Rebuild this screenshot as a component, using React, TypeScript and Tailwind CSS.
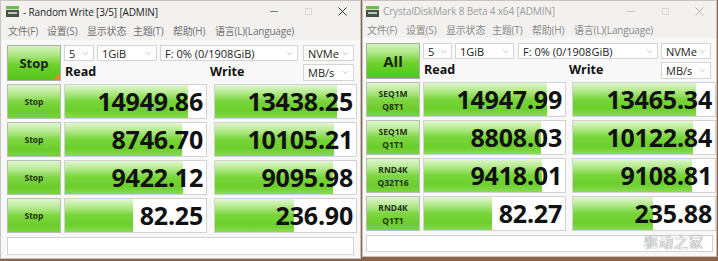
import React from "react";
import { ChevronDown } from "lucide-react";

type Row = { label: string[]; read: number; write: number; rt: string; wt: string };

const leftRows: Row[] = [
  { label: ["Stop"], read: 14949.86, write: 13438.25, rt: "14949.86", wt: "13438.25" },
  { label: ["Stop"], read: 8746.7, write: 10105.21, rt: "8746.70", wt: "10105.21" },
  { label: ["Stop"], read: 9422.12, write: 9095.98, rt: "9422.12", wt: "9095.98" },
  { label: ["Stop"], read: 82.25, write: 236.9, rt: "82.25", wt: "236.90" },
];

const rightRows: Row[] = [
  { label: ["SEQ1M", "Q8T1"], read: 14947.99, write: 13465.34, rt: "14947.99", wt: "13465.34" },
  { label: ["SEQ1M", "Q1T1"], read: 8808.03, write: 10122.84, rt: "8808.03", wt: "10122.84" },
  { label: ["RND4K", "Q32T16"], read: 9418.01, write: 9108.81, rt: "9418.01", wt: "9108.81" },
  { label: ["RND4K", "Q1T1"], read: 82.27, write: 235.88, rt: "82.27", wt: "235.88" },
];

function pct(v: number) {
  return Math.max(0, Math.min(1, 0.173 * Math.log10(v) + 0.15));
}

function Bar({ value, text, w }: { value: number; text: string; w: string }) {
  return (
    <div className={`${w} relative h-full overflow-hidden border border-[#d2d2d2] bg-white`}>
      <div
        className="absolute inset-y-0 left-0 bg-[linear-gradient(180deg,#e2f7d2_0%,#b2e98a_24%,#78d43a_50%,#6ccf2c_78%,#8ada55_100%)]"
        style={{ width: `${pct(value) * 100}%` }}
      />
      <div className="relative flex h-full items-center justify-end pr-[3px] font-['Open_Sans',sans-serif] text-[25px] font-bold leading-none tracking-[-0.2px] text-[#111]">
        {text}
      </div>
    </div>
  );
}

function Combo({ text, w }: { text: string; w: string }) {
  return (
    <div className={`${w} flex h-full items-center justify-between border border-[#d4d4d4] bg-white pl-[4px] pr-[3px] text-[11px] leading-none text-[#222]`}>
      <span>{text}</span>
      <ChevronDown size={9} strokeWidth={1.4} className="text-[#9a9a9a]" />
    </div>
  );
}

function AppIcon() {
  return (
    <svg width="13" height="11" viewBox="0 0 13 11">
      <rect x="0" y="0" width="13" height="3" fill="#6cbf45" />
      <rect x="0" y="3" width="13" height="1" fill="#d9d9d9" />
      <rect x="0" y="4" width="13" height="7" fill="#4a4f4a" />
      <rect x="2" y="6" width="9" height="2" fill="#b8c8b4" />
    </svg>
  );
}

function Window({ right }: { right: boolean }) {
  const rows = right ? rightRows : leftRows;
  const menu = ["文件(F)", "设置(S)", "显示状态", "主题(T)", "帮助(H)", "语言(L)(Language)"];
  const menuW = ["w-[39px]", "w-[40px]", "w-[46px]", "w-[40px]", "w-[42px]", ""];
  return (
    <div
      className={`${
        right ? "w-[355px] h-[257px]" : "w-[361px] h-[259px]"
      } relative flex shrink-0 flex-col overflow-hidden border border-[#c9c4c0] bg-[#f8f8f8] font-['Open_Sans','Noto_Sans_CJK_SC',sans-serif]`}
    >
      {/* title bar */}
      <div className={`${right ? "h-[20px] pl-[3px]" : "h-[21px] pl-[5px]"} flex items-center bg-[#f3f1f0]`}>
        <AppIcon />
        <span
          className={`${right ? "text-[#9c9c9c]" : "text-[#222]"} ml-[4px] text-[10px] leading-none tracking-[-0.15px]`}
        >
          {right ? "CrystalDiskMark 8 Beta 4 x64 [ADMIN]" : " - Random Write [3/5] [ADMIN]"}
        </span>
        <div className={`${right ? "mr-[0px]" : "mr-[1px]"} ml-auto flex h-full items-center`}>
          <div className="flex w-[34px] justify-center">
            <div className={`${right ? "bg-[#c8c8c8]" : "bg-[#7a7a7a]"} h-[1px] w-[8px]`} />
          </div>
          <div className="flex w-[34px] justify-center">
            <div className="h-[7px] w-[7px] border border-[#d6d6d6]" />
          </div>
          <div className={`flex w-[34px] justify-center ${right ? "text-[#b8b8b8]" : "text-[#333]"}`}>
            <svg width="9" height="9" viewBox="0 0 9 9">
              <path d="M0.5 0.5 L8.5 8.5 M8.5 0.5 L0.5 8.5" stroke="currentColor" strokeWidth="1" />
            </svg>
          </div>
        </div>
      </div>
      {/* menu */}
      <div
        className={`${
          right ? "h-[17px] pl-[4px] text-[#8a8a8a]" : "h-[18px] pl-[7px] text-[#707070]"
        } flex items-center bg-[#f3f1f0] text-[10px] leading-none tracking-[-0.2px]`}
      >
        {menu.map((m, i) => (
          <span key={m} className={`${menuW[i]} shrink-0 whitespace-nowrap`}>
            {m}
          </span>
        ))}
      </div>
      {/* content */}
      <div className={`${right ? "pl-[3px]" : "pl-[6px]"} flex flex-col gap-[3px] pt-[5px]`}>
        <div className="flex h-[36px] gap-[3px]">
          <div className="relative flex w-[54px] items-center justify-center border border-[#a9b0a5] bg-[linear-gradient(180deg,#d6f2c0_0%,#a7e47b_30%,#6fd12e_55%,#56c51a_100%)]">
            <span className={`${right ? "text-[15px]" : "text-[13px]"} font-bold leading-none text-[#17260e]`}>
              {right ? "All" : "Stop"}
            </span>
            {!right && (
              <div className="absolute bottom-0 right-0 h-0 w-0 border-b-[7px] border-l-[7px] border-b-[#e8862a] border-l-transparent" />
            )}
          </div>
          <div className="flex flex-col gap-[3px]">
            <div className="flex h-[16px]">
              <Combo text="5" w={right ? "w-[29px]" : "w-[30px]"} />
              <div className="w-[3px]" />
              <Combo text="1GiB" w={right ? "w-[59px]" : "w-[60px]"} />
              <div className={right ? "w-[4px]" : "w-[3px]"} />
              <Combo text="F: 0% (0/1908GiB)" w={right ? "w-[140px]" : "w-[138px]"} />
              <div className={right ? "w-[3px]" : "w-[5px]"} />
              <Combo text="NVMe" w={right ? "w-[50px]" : "w-[51px]"} />
            </div>
            <div className="flex h-[17px] items-center">
              <span className="w-[146px] pl-[1px] text-[12.5px] font-bold leading-none text-[#111]">Read</span>
              <span className="flex-1 text-[12.5px] font-bold leading-none text-[#111]">Write</span>
              <Combo text="MB/s" w={right ? "w-[50px]" : "w-[51px]"} />
            </div>
          </div>
        </div>
        <div className="flex flex-col gap-[3px]">
          {rows.map((r, i) => (
            <div key={i} className="flex h-[35px] gap-[3px]">
              <div className="flex w-[54px] flex-col items-center justify-center border border-[#b9beb6] bg-[linear-gradient(180deg,#dff5cf_0%,#b3e88d_28%,#7fd643_50%,#6ccd2b_80%,#7ad43d_100%)]">
                {r.label.map((l) => (
                  <span key={l} className="text-[8.5px] font-bold leading-[13px] text-[#1f3314]">
                    {l}
                  </span>
                ))}
              </div>
              <Bar value={r.read} text={r.rt} w="w-[143px]" />
              <div className={right ? "w-0" : "w-[1px]"} />
              <Bar value={r.write} text={r.wt} w={right ? "w-[144px]" : "w-[143px]"} />
            </div>
          ))}
        </div>
        <div className={`${right ? "h-[17px] w-[347px]" : "h-[18px] w-[347px]"} mt-[1px] border border-[#d2d2d2] bg-white`} />
      </div>
      {right && (
        <div className="absolute bottom-[8px] right-[12px] font-['Noto_Sans_CJK_SC',sans-serif] text-[14px] leading-none tracking-[1px] text-[#f4f4f4] [text-shadow:0_0_1px_#7c7c7c,0_0_1px_#7c7c7c]">
          驱动之家
        </div>
      )}
    </div>
  );
}

export default function App() {
  return (
    <div className="flex h-[261px] w-[718px] items-start gap-[1px] overflow-hidden bg-[#8a634a]">
      <Window right={false} />
      <Window right={true} />
    </div>
  );
}
